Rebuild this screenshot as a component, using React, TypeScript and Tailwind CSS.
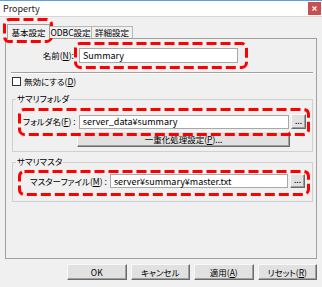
import React from "react";

const font = {
  fontFamily: '"Noto Sans CJK JP", "Liberation Sans", sans-serif',
  fontFeatureSettings: '"palt"',
};

function U({ c }: { c: string }) {
  return <span className="underline underline-offset-[1px]">{c}</span>;
}

function DashBox({ x, y, w, h }: { x: number; y: number; w: number; h: number }) {
  return (
    <svg
      className="absolute pointer-events-none"
      style={{ left: x, top: y }}
      width={w}
      height={h}
      viewBox={`0 0 ${w} ${h}`}
    >
      <rect
        x={1.5}
        y={1.5}
        width={w - 3}
        height={h - 3}
        rx={5}
        ry={5}
        fill="none"
        stroke="#ff0000"
        strokeWidth={3}
        strokeDasharray="10 4"
      />
    </svg>
  );
}

function Btn({ children, className = "" }: { children: React.ReactNode; className?: string }) {
  return (
    <div
      className={
        "flex items-center justify-center whitespace-nowrap bg-[#e1e1e1] border border-t-[#f8f8f8] border-l-[#f8f8f8] border-r-[#6a6a6a] border-b-[#6a6a6a] shadow-[inset_-1px_-1px_0_#a0a0a0] text-[8.5px] leading-none text-black " +
        className
      }
    >
      {children}
    </div>
  );
}

export default function App() {
  return (
    <div
      className="w-[322px] h-[287px] bg-[#f0f0f0] relative overflow-hidden flex flex-col text-[8.5px] text-black"
      style={font}
    >
      {/* title bar */}
      <div className="h-[17px] shrink-0 bg-white border-t border-t-[#5aa3e0] border-b border-b-[#d6d6d6] flex items-center justify-between pl-[3px] pr-[1px]">
        <span className="text-[9px] leading-none text-[#222]">Property</span>
        <div className="w-[13px] h-[13px] bg-[#c75050] flex items-center justify-center">
          <svg width="5" height="5" viewBox="0 0 5 5">
            <path d="M0.5 0.5 L4.5 4.5 M4.5 0.5 L0.5 4.5" stroke="#fff" strokeWidth="1.1" />
          </svg>
        </div>
      </div>

      {/* body */}
      <div className="flex flex-col px-[5px] pt-[7px]">
        {/* tabs */}
        <div className="flex items-end h-[14px] pl-[2px] relative z-10">
          <div className="h-[15px] w-[43px] -mb-[1px] bg-[#f0f0f0] border border-b-0 border-[#a0a0a0] flex items-center justify-center leading-none whitespace-nowrap">
            基本設定
          </div>
          <div className="h-[12px] w-[42px] border-t border-r border-[#b8b8b8] bg-[#f0f0f0] flex items-center justify-center leading-none whitespace-nowrap">
            ODBC設定
          </div>
          <div className="h-[12px] w-[41px] border-t border-r border-[#b8b8b8] bg-[#f0f0f0] flex items-center justify-center leading-none whitespace-nowrap">
            詳細設定
          </div>
        </div>

        {/* panel */}
        <div className="h-[221px] w-[312px] border border-[#a0a0a0] flex flex-col">
          {/* name row */}
          <div className="flex items-center mt-[9px] h-[15px]">
            <div className="w-[69px] pr-[1px] text-right leading-none whitespace-nowrap">
              名前(<U c="N" />):
            </div>
            <div className="ml-[4px] w-[159px] h-[15px] bg-white border border-[#a8a8a8] flex items-center pl-[3px] leading-none text-[9px]">
              Summary
            </div>
          </div>

          {/* separator */}
          <div className="mt-[9px] ml-[5px] mr-[3px] border-t border-t-[#a0a0a0] border-b border-b-white" />

          {/* checkbox */}
          <div className="flex items-center mt-[2px] ml-[6px] h-[10px]">
            <div className="w-[9px] h-[9px] bg-white border border-[#333]" />
            <span className="ml-[3px] leading-none whitespace-nowrap">
              無効にする(<U c="D" />)
            </span>
          </div>

          {/* group 1 */}
          <div className="relative mt-[13px] ml-[6px] mr-[3px] h-[53px] border border-[#d0d0d0]">
            <span className="absolute -top-[6px] left-[3px] px-[1px] bg-[#f0f0f0] leading-none whitespace-nowrap">
              サマリフォルダ
            </span>
            <div className="flex items-center mt-[14px] h-[15px] pl-[10px] pr-[6px]">
              <div className="min-w-[54px] shrink-0 pr-[3px] leading-none whitespace-nowrap">
                フォルダ名(<U c="F" />) :
              </div>
              <div className="flex-1 h-[14px] bg-white border border-[#a8a8a8] flex items-center pl-[3px] leading-none whitespace-nowrap text-[9px]">
                server_data¥summary
              </div>
              <Btn className="ml-[2px] w-[15px] h-[15px] shrink-0">
                <span className="-mt-[3px]">...</span>
              </Btn>
            </div>
            <div className="flex mt-[2px]">
              <div className="w-[64px]" />
              <Btn className="w-[213px] h-[16px]">
                一重化処理設定(<U c="P" />)...
              </Btn>
            </div>
          </div>

          {/* group 2 */}
          <div className="relative mt-[10px] ml-[6px] mr-[3px] h-[40px] border border-[#d0d0d0]">
            <span className="absolute -top-[6px] left-[3px] px-[1px] bg-[#f0f0f0] leading-none whitespace-nowrap">
              サマリマスタ
            </span>
            <div className="flex items-center mt-[11px] h-[14px] pl-[17px] pr-[7px]">
              <div className="min-w-[76px] shrink-0 pr-[3px] leading-none whitespace-nowrap">
                マスターファイル(<U c="M" />) :
              </div>
              <div className="flex-1 h-[14px] bg-white border border-[#a8a8a8] flex items-center pl-[3px] leading-none whitespace-nowrap text-[9px]">
                server¥summary¥master.txt
              </div>
              <Btn className="ml-[2px] w-[15px] h-[14px] shrink-0">
                <span className="-mt-[3px]">...</span>
              </Btn>
            </div>
          </div>
        </div>

        {/* bottom buttons */}
        <div className="flex gap-[4px] mt-[5px] pl-[62px]">
          <Btn className="w-[60px] h-[16px]">OK</Btn>
          <Btn className="w-[60px] h-[16px]">キャンセル</Btn>
          <Btn className="w-[60px] h-[16px]">
            適用(<U c="A" />)
          </Btn>
          <Btn className="w-[60px] h-[16px]">
            リセット(<U c="R" />)
          </Btn>
        </div>
      </div>

      {/* red dashed highlights */}
      <DashBox x={3} y={18} w={50} h={25} />
      <DashBox x={74} y={42} w={174} h={27} />
      <DashBox x={18} y={108} w={292} h={28} />
      <DashBox x={18} y={170} w={292} h={26} />
    </div>
  );
}
